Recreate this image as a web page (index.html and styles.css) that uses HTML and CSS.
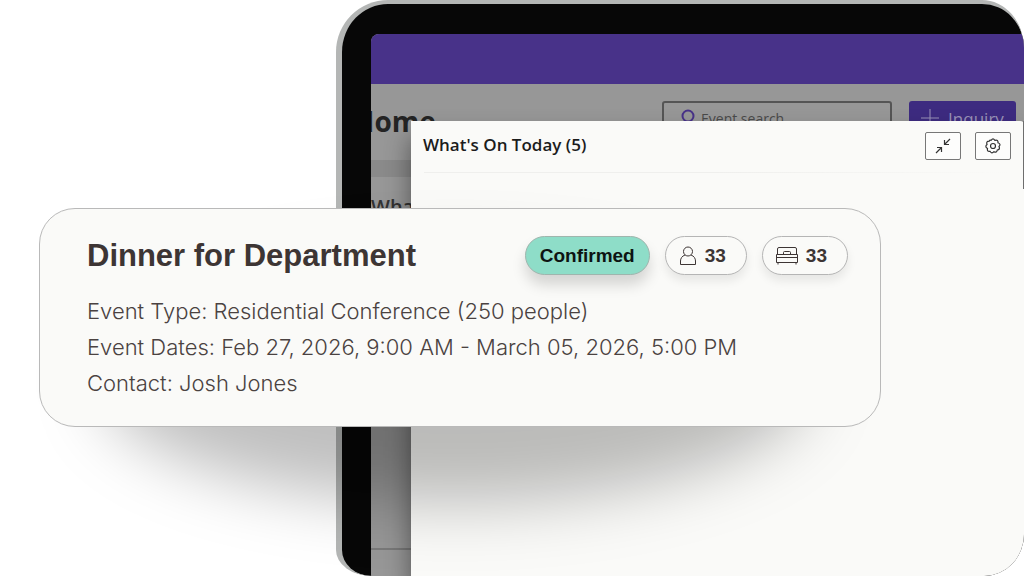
FILE: index.html
```html
<!DOCTYPE html>
<html lang="en">
<head>
    <meta charset="UTF-8">
    <meta name="viewport" content="width=device-width, initial-scale=1.0">
    <title>What's On Today</title>
    <link rel="stylesheet" href="styles.css">
</head>
<body>
    <main class="hero">
        <div class="tablet">
            <div class="screen">
                <div class="navbar"></div>
                <div class="toolbar">
                    <h1 class="page-title">Home</h1>
                    <label class="search">
                        <svg class="search-icon" viewBox="0 0 16 18" aria-hidden="true">
                            <circle cx="8" cy="7" r="5.5"/>
                            <path d="M5 12l-3 5"/>
                        </svg>
                        <input type="text" placeholder="Event search" aria-label="Event search">
                    </label>
                    <button class="inquiry" type="button">
                        <svg class="plus-icon" viewBox="0 0 18 18" aria-hidden="true">
                            <path d="M9 0v18M0 9h18"/>
                        </svg>
                        Inquiry
                    </button>
                </div>
                <div class="strip"></div>
                <h2 class="section-title">What's On</h2>
                <div class="screen-foot"></div>
            </div>

            <section class="panel">
                <header class="panel-header">
                    <h2 class="panel-title">What's On Today (5)</h2>
                    <button class="icon-btn" type="button" aria-label="Collapse">
                        <svg viewBox="0 0 16 16" aria-hidden="true">
                            <path d="M15 1L9.500 6.500M9.500 2v4.500H14M1 15l5.500-5.500M2 9.500h4.500V14"/>
                        </svg>
                    </button>
                    <button class="icon-btn" type="button" aria-label="Settings">
                        <svg viewBox="0 0 16 16" aria-hidden="true">
                            <path d="M6.200 2.300Q8 -.6 9.800 2.300Q13.400 1.300 13 4.800Q16.400 6.200 14 8.500Q15.500 11.500 12.300 12Q11.800 15.300 9 13.700Q6.700 16.200 5 13.300Q1.700 13.800 2.500 10.500Q-.5 8.700 2 6.500Q.8 3.200 4.200 3.200Q4.800 1.800 6.200 2.300z"/>
                            <circle cx="8" cy="8" r="2.500"/>
                        </svg>
                    </button>
                </header>
                <hr class="divider">
            </section>
        </div>

        <div class="event-wrap">
            <article class="event-card">
                <div class="event-top">
                    <h2 class="event-title">Dinner for Department</h2>
                    <div class="pills">
                        <span class="pill confirmed">Confirmed</span>
                        <span class="pill">
                            <svg class="person-icon" viewBox="0 0 18 20" aria-hidden="true">
                                <circle cx="9" cy="5.500" r="4.500"/>
                                <path d="M6 9C3 10 1.500 12.500 1.500 15v3.500h15V15c0-2.500-1.500-5-4.500-6"/>
                            </svg>
                            33
                        </span>
                        <span class="pill">
                            <svg class="bed-icon" viewBox="0 0 22 20" aria-hidden="true">
                                <path d="M1.500 8.500V3q0-1.500 1.500-1.500h16q1.500 0 1.500 1.500v5.500M7.500 8V6.500Q7.500 5.500 8.500 5.500h5q1 0 1 1V8M.5 8.500h21v8H.5zM.5 11.500h21M2 16.500v2M20 16.500v2"/>
                            </svg>
                            33
                        </span>
                    </div>
                </div>
                <ul class="event-info">
                    <li>Event Type: Residential Conference (250 people)</li>
                    <li>Event Dates: Feb 27, 2026, 9:00 AM - March 05, 2026, 5:00 PM</li>
                    <li>Contact: Josh Jones</li>
                </ul>
            </article>
        </div>
    </main>
</body>
</html>
```

FILE: styles.css
```css
* {
    box-sizing: border-box;
}
body {
    margin: 0;
    background-color: #fff;
    font-family: "Open Sans", sans-serif;
}
h1, h2, ul {
    margin: 0;
    padding: 0;
}
button {
    padding: 0;
    cursor: pointer;
}
svg {
    fill: none;
    stroke: currentColor;
    flex-shrink: 0;
}
.hero {
    position: relative;
    min-height: 100vh;
    display: flex;
    overflow: hidden;
}

/* tablet frame, runs off the right edge */
.tablet {
    position: relative;
    flex: 1;
    display: flex;
    margin-left: 336px;
    padding: 30px 0 0 29px;
    border: solid #b4b6b5;
    border-width: 4px 0 0 6px;
    border-radius: 52px 42px 40px 36px / 52px 48px 42px 26px;
    background-color: #070707;
    overflow: hidden;
}
.screen {
    flex: 1;
    display: flex;
    flex-direction: column;
    border-top-left-radius: 8px;
    background-color: #979797;
    overflow: hidden;
}
.navbar {
    height: 50px;
    background-color: #483289;
}
.toolbar {
    display: flex;
    align-items: flex-start;
    gap: 17px;
    height: 76px;
    padding: 17px 8px 0 0;
}
.page-title {
    flex: 1;
    margin-left: -18px;
    font-size: 28px;
    line-height: 40px;
    color: #242424;
}
.search {
    display: flex;
    align-items: center;
    gap: 5px;
    width: 230px;
    height: 34px;
    padding-left: 16px;
    border: 2px solid #555;
    border-radius: 3px;
}
.search input {
    width: 100%;
    padding: 0;
    border: none;
    outline: none;
    background: none;
    font-family: inherit;
    font-size: 14px;
}
.search input::placeholder {
    color: #4a4a4a;
}
.search-icon {
    width: 16px;
    height: 18px;
    color: #483289;
    stroke-width: 2;
}
.inquiry {
    display: flex;
    align-items: center;
    justify-content: center;
    gap: 9px;
    width: 107px;
    height: 34px;
    border: none;
    border-radius: 3px;
    background-color: #3d2b80;
    color: #9a92b8;
    font-family: inherit;
    font-size: 17px;
}
.plus-icon {
    width: 18px;
    height: 18px;
}
.strip {
    height: 17px;
    background-color: #8a8a8a;
}
.section-title {
    margin-top: 16px;
    font-size: 20px;
    font-weight: 600;
    line-height: 28px;
    color: #333;
}
.screen-foot {
    height: 28px;
    margin-top: auto;
    border-top: 2px solid #7a7a7a;
}

/* widget panel over the dimmed screen */
.panel {
    position: absolute;
    top: 117px;
    right: 0;
    bottom: 0;
    left: 69px;
    border-top-right-radius: 4px;
    background-color: #fafaf8;
    box-shadow: 0 16px 26px rgba(0, 0, 0, 0.45);
}
.panel::after {
    content: "";
    position: absolute;
    top: 0;
    right: 0;
    width: 1px;
    height: 68px;
    background-color: #6e6e6e;
}
.panel-header {
    display: flex;
    align-items: center;
    gap: 14px;
    height: 50px;
    margin: 0 13px 0 12px;
}
.divider {
    height: 1px;
    margin: 1px 13px 0;
    border: none;
    background: linear-gradient(to right, #efefed 50%, #fafaf8);
}
.panel-title {
    flex: 1;
    padding-bottom: 4px;
    font-size: 17px;
    font-weight: 600;
    color: #1c1c1c;
}
.icon-btn {
    display: flex;
    align-items: center;
    justify-content: center;
    width: 36px;
    height: 28px;
    border: 1px solid #777;
    border-radius: 2px;
    background-color: #fdfdfc;
    color: #333;
}
.icon-btn svg {
    width: 16px;
    height: 16px;
    stroke-width: 1.2;
}

/* event card */
.event-wrap {
    position: absolute;
    top: 208px;
    right: 143px;
    left: 39px;
}
.event-wrap::before {
    content: "";
    position: absolute;
    top: 50px;
    right: 70px;
    bottom: -76px;
    left: 60px;
    border-radius: 50%;
    background-color: rgba(0, 0, 0, 0.25);
    filter: blur(32px);
}
.event-card {
    position: relative;
    padding: 27px 32px 25px 47px;
    border: 1px solid #b9b9b9;
    border-radius: 36px;
    background-color: #fafaf8;
}
.event-top {
    display: flex;
    align-items: center;
    justify-content: space-between;
    margin-bottom: 18px;
}
.event-title {
    font-family: "Liberation Sans", Arial, sans-serif;
    font-size: 31px;
    color: #3d3534;
}
.pills {
    display: flex;
    gap: 15px;
}
.pill {
    display: flex;
    align-items: center;
    gap: 8px;
    height: 39px;
    padding: 0 20px 0 13px;
    border: 1px solid #b5b5b5;
    border-radius: 20px;
    background-color: #fafaf8;
    box-shadow: 0 6px 10px rgba(0, 0, 0, 0.08);
    color: #3d3534;
    font-family: "Liberation Sans", Arial, sans-serif;
    font-size: 19px;
    font-weight: bold;
}
.confirmed {
    padding: 0 14px;
    border-color: #9fb5ad;
    background-color: #8eddc8;
    box-shadow: 0 10px 14px rgba(0, 0, 0, 0.15);
    color: #0d1412;
}
.person-icon {
    width: 18px;
    height: 20px;
}
.bed-icon {
    width: 22px;
    height: 20px;
}
.event-info {
    list-style: none;
    font-family: Inter, sans-serif;
    font-size: 22px;
    font-weight: 300;
    line-height: 36px;
    color: #4a4241;
}
```
